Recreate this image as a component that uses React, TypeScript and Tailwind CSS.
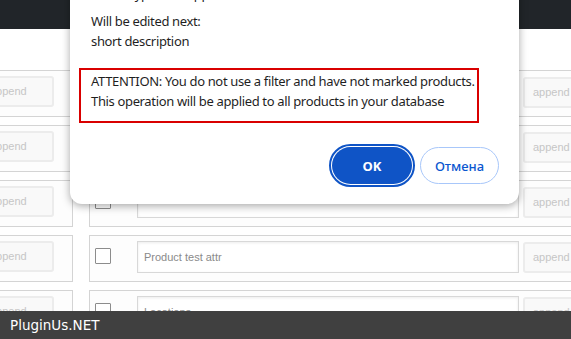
import React from 'react';

const rows = ['', '', '', 'Product test attr', 'Locations'];

const AppendButton: React.FC<{ className?: string }> = ({ className = '' }) => (
  <button
    type="button"
    className={`shrink-0 h-[31px] border-2 border-[#ececec] bg-[#f9f9f9] rounded-[3px] text-left text-[11px] text-[#c6c6c6] font-['Liberation_Sans',sans-serif] ${className}`}
  >
    append
  </button>
);

const Row: React.FC<{ text: string }> = ({ text }) => (
  <div className="flex h-[47px] mb-[8px]">
    <div className="w-[73px] shrink-0 border-y border-r border-[#d4d4d4] bg-[#fdfdfd] pt-[5px] overflow-hidden">
      <AppendButton className="ml-[-14px] w-[68px] pl-[2px]" />
    </div>
    <div className="ml-[16px] flex-1 min-w-0 flex items-start border-y border-l border-[#d4d4d4] bg-[#fdfdfd] overflow-hidden">
      <span className="ml-[5px] mt-[12px] w-4 h-4 shrink-0 border border-[#8c8c8c] bg-white rounded-[1px]" />
      <div className="ml-[26px] mt-[5px] w-[382px] h-[32px] shrink-0 flex items-center pl-[6px] border border-[#d8d8d8] bg-white shadow-[inset_0_1px_3px_rgba(0,0,0,0.08)] text-[11px] text-[#8a8a8a] font-['Liberation_Sans',sans-serif]">
        {text}
      </div>
      <AppendButton className="ml-[4px] mt-[6px] w-[60px] pl-[8px]" />
    </div>
  </div>
);

export default function App() {
  return (
    <div className="relative w-[571px] h-[339px] overflow-hidden bg-white">
      <div className="h-[29px] bg-[#212529]" />
      <div className="mt-[41px]">
        {rows.map((t, i) => (
          <Row key={i} text={t} />
        ))}
      </div>

      {/* confirm dialog */}
      <div className="absolute left-[70px] top-[-36px] w-[449px] bg-white rounded-[12px] shadow-[0_2px_8px_rgba(0,0,0,0.35)] pt-[20px] pb-[20px] font-['Noto_Sans',sans-serif] text-[13px] leading-[20px] tracking-[-0.35px] text-[#1f1f1f]">
        <p className="pl-[21px] mb-[7px]">Action type: text append</p>
        <p className="pl-[21px]">Will be edited next:</p>
        <p className="pl-[21px]">short description</p>
        <div className="ml-[9px] mt-[17px] w-[400px] border-2 border-[#d90000] pl-[10px] pt-[1px] pb-[10px]">
          <p>ATTENTION: You do not use a filter and have not marked products.</p>
          <p>This operation will be applied to all products in your database</p>
        </div>
        <div className="mt-[24px] pr-[20px] flex justify-end gap-[8px] tracking-normal">
          <button
            type="button"
            className="w-[80px] h-[37px] rounded-full bg-[#0f54c6] text-white font-bold outline-2 outline-offset-1 outline-[#0f54c6]"
          >
            OK
          </button>
          <button
            type="button"
            className="w-[79px] h-[37px] rounded-full bg-white border border-[#a8c7fa] text-[#0b57d0] font-medium"
          >
            Отмена
          </button>
        </div>
      </div>

      {/* watermark bar */}
      <div className="absolute left-0 right-0 bottom-0 h-[28px] bg-[#404040] flex items-center pl-[10px] text-white text-[13.5px] font-['DejaVu_Sans',sans-serif]">
        PluginUs.NET
      </div>
    </div>
  );
}
